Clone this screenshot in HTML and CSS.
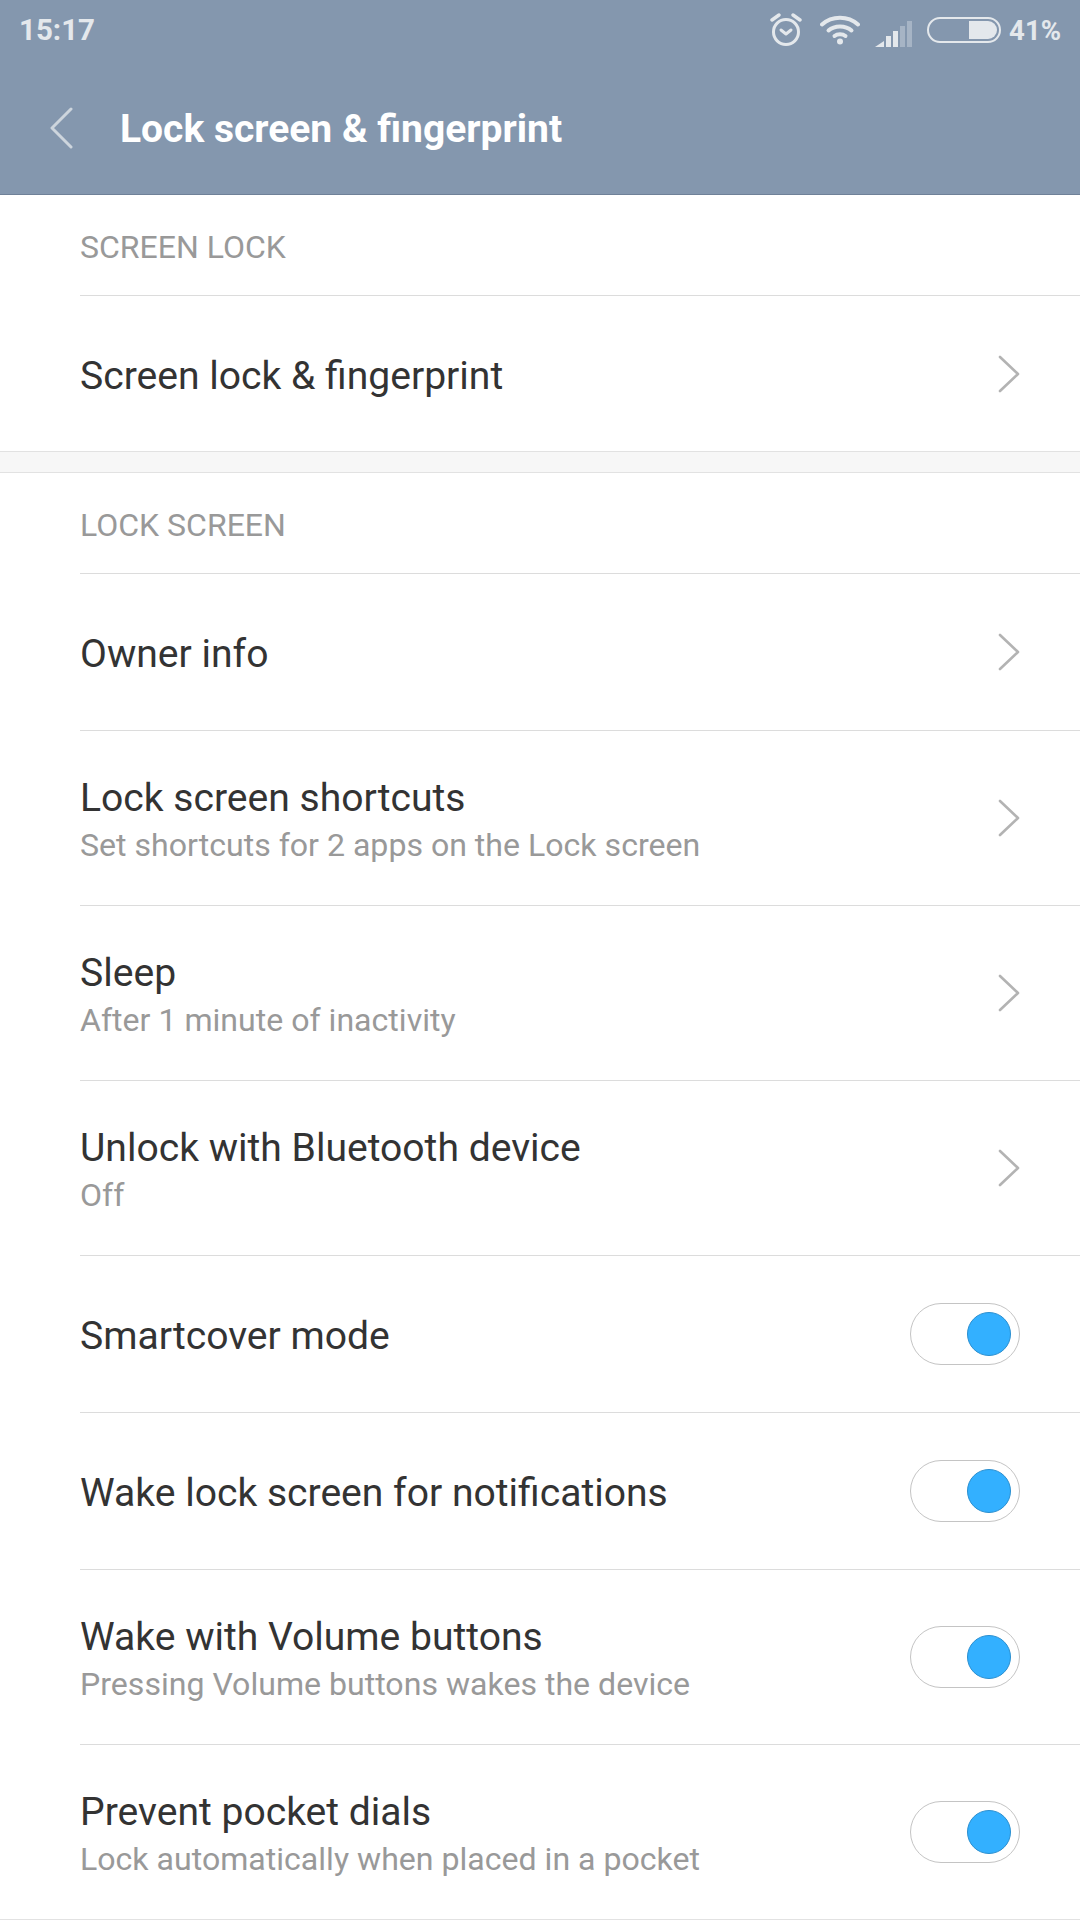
FILE: index.html
```html
<!DOCTYPE html>
<html lang="en">
<head>
  <meta charset="UTF-8" />
  <meta name="viewport" content="width=device-width, initial-scale=1" />
  <title>Lock screen & fingerprint</title>
  <link rel="stylesheet" href="styles.css">
</head>
<body>
  <header class="page-header">
    <div class="status-bar">
      <span class="clock">15:17</span>
      <div class="status-icons">
        <svg class="icon-alarm" width="32" height="34" viewBox="0 0 32 34" fill="none" stroke="#e4e8ec" stroke-width="3" stroke-linecap="round" stroke-linejoin="round">
          <circle cx="16" cy="19" r="12.5"/>
          <path d="M11 17l5 4 5-4"/>
          <path d="M2 7l7-5M30 7l-7-5" stroke-width="3.4"/>
        </svg>
        <svg class="icon-wifi" width="40" height="30" viewBox="0 0 40 30" fill="none" stroke="#e4e8ec" stroke-width="4" stroke-linecap="round">
          <path d="M2 9.500C12 0.500 28 0.500 38 9.500"/>
          <path d="M8.500 15.500C14.500 10 25.500 10 31.500 15.500"/>
          <path d="M14.500 21C17.500 18.500 22.500 18.500 25.500 21"/>
          <circle cx="20" cy="26.500" r="3" fill="#e4e8ec" stroke="none"/>
        </svg>
        <svg class="icon-signal" width="38" height="26" viewBox="0 0 38 26">
          <path d="M0 26l9-6v6z" fill="#e4e8ec"/>
          <rect x="11" y="15" width="5" height="11" fill="#e4e8ec"/>
          <rect x="18" y="10" width="5" height="16" fill="#e4e8ec"/>
          <rect x="25" y="5" width="5" height="21" fill="#a6b4c5"/>
          <rect x="32" y="0" width="5" height="26" fill="#a6b4c5"/>
        </svg>
        <div class="battery"><div class="battery-fill"></div></div>
        <span class="battery-text">41%</span>
      </div>
    </div>
    <div class="toolbar">
      <svg class="back-icon" width="24" height="42" viewBox="0 0 24 42" fill="none" stroke="#cdd5dd" stroke-width="3" stroke-linecap="round" stroke-linejoin="round">
        <path d="M22 2L3 21l19 19"/>
      </svg>
      <h1>Lock screen &amp; fingerprint</h1>
    </div>
  </header>

  <main>
    <section class="group">
      <h2 class="group-title">SCREEN LOCK</h2>
      <div class="row">
        <div class="row-text"><div class="row-name">Screen lock &amp; fingerprint</div></div>
        <svg class="chevron" width="22" height="38" viewBox="0 0 22 38" fill="none" stroke="#b3b3b3" stroke-width="2.600" stroke-linecap="round" stroke-linejoin="round"><path d="M2 2l18 17L2 36"/></svg>
      </div>
    </section>

    <section class="group group-second">
      <h2 class="group-title">LOCK SCREEN</h2>
      <div class="row">
        <div class="row-text"><div class="row-name">Owner info</div></div>
        <svg class="chevron" width="22" height="38" viewBox="0 0 22 38" fill="none" stroke="#b3b3b3" stroke-width="2.600" stroke-linecap="round" stroke-linejoin="round"><path d="M2 2l18 17L2 36"/></svg>
      </div>
      <div class="row row-tall">
        <div class="row-text">
          <div class="row-name">Lock screen shortcuts</div>
          <div class="row-sub">Set shortcuts for 2 apps on the Lock screen</div>
        </div>
        <svg class="chevron" width="22" height="38" viewBox="0 0 22 38" fill="none" stroke="#b3b3b3" stroke-width="2.600" stroke-linecap="round" stroke-linejoin="round"><path d="M2 2l18 17L2 36"/></svg>
      </div>
      <div class="row row-tall">
        <div class="row-text">
          <div class="row-name">Sleep</div>
          <div class="row-sub">After 1 minute of inactivity</div>
        </div>
        <svg class="chevron" width="22" height="38" viewBox="0 0 22 38" fill="none" stroke="#b3b3b3" stroke-width="2.600" stroke-linecap="round" stroke-linejoin="round"><path d="M2 2l18 17L2 36"/></svg>
      </div>
      <div class="row row-tall">
        <div class="row-text">
          <div class="row-name">Unlock with Bluetooth device</div>
          <div class="row-sub">Off</div>
        </div>
        <svg class="chevron" width="22" height="38" viewBox="0 0 22 38" fill="none" stroke="#b3b3b3" stroke-width="2.600" stroke-linecap="round" stroke-linejoin="round"><path d="M2 2l18 17L2 36"/></svg>
      </div>
      <div class="row">
        <div class="row-text"><div class="row-name">Smartcover mode</div></div>
        <div class="switch"><div class="switch-knob"></div></div>
      </div>
      <div class="row">
        <div class="row-text"><div class="row-name">Wake lock screen for notifications</div></div>
        <div class="switch"><div class="switch-knob"></div></div>
      </div>
      <div class="row row-tall">
        <div class="row-text">
          <div class="row-name">Wake with Volume buttons</div>
          <div class="row-sub">Pressing Volume buttons wakes the device</div>
        </div>
        <div class="switch"><div class="switch-knob"></div></div>
      </div>
      <div class="row row-tall">
        <div class="row-text">
          <div class="row-name">Prevent pocket dials</div>
          <div class="row-sub">Lock automatically when placed in a pocket</div>
        </div>
        <div class="switch"><div class="switch-knob"></div></div>
      </div>
    </section>
  </main>
</body>
</html>
```

FILE: styles.css
```css
* {
  box-sizing: border-box;
}
body {
  margin: 0;
  width: 1080px;
  height: 1920px;
  overflow: hidden;
  font-family: Roboto, sans-serif;
  background: #f7f7f7;
  color: #333;
}

.page-header {
  height: 195px;
  background: #8497ae;
  border-bottom: 1px solid #6f8198;
  color: #fff;
}

.status-bar {
  height: 60px;
  padding: 0 19px;
  display: flex;
  justify-content: space-between;
  align-items: center;
}
.clock {
  font-size: 29.500px;
  font-weight: 700;
  color: #e4e8ec;
}
.status-icons {
  display: flex;
  align-items: center;
}
.icon-alarm {
  margin-right: 18px;
}
.icon-wifi {
  margin-right: 15px;
}
.icon-signal {
  margin-right: 14px;
  margin-top: 8px;
}
.battery {
  width: 74px;
  height: 26px;
  border: 2px solid #e4e8ec;
  border-radius: 13px;
  padding: 2px;
  margin-right: 8px;
  display: flex;
  justify-content: flex-end;
}
.battery-fill {
  width: 28px;
  background: #e4e8ec;
  border-radius: 0 9px 9px 0;
}
.battery-text {
  font-size: 27.500px;
  font-weight: 700;
  color: #e4e8ec;
}

.toolbar {
  height: 134px;
  padding: 0 0 0 49px;
  display: flex;
  align-items: center;
}
.back-icon {
  margin: 2px 47px 0 0;
}
h1 {
  margin: 4px 0 0;
  font-size: 39px;
  font-weight: 700;
}

.group {
  background: #fff;
}
.group:first-child {
  height: 257px;
  border-bottom: 1px solid #e2e2e2;
}
.group-second {
  height: 1448px;
  margin-top: 20px;
  border-top: 1px solid #e2e2e2;
  border-bottom: 1px solid #e2e2e2;
}
.group-title {
  margin: 0 0 0 80px;
  height: 100px;
  padding-top: 4px;
  display: flex;
  align-items: center;
  font-size: 32px;
  font-weight: 400;
  color: #999;
}

.row {
  margin-left: 80px;
  height: 157px;
  padding-right: 60px;
  border-top: 1px solid #dcdcdc;
  display: flex;
  justify-content: space-between;
  align-items: center;
}
.row-tall {
  height: 175px;
}
.row-text {
  padding-top: 3px;
}
.row-name {
  font-size: 39.100px;
  color: #333;
}
.row-sub {
  margin-top: 5px;
  font-size: 32.100px;
  color: #999;
}

.switch {
  width: 110px;
  height: 62px;
  border: 1px solid #c4c4c4;
  border-radius: 31px;
  padding-right: 8px;
  display: flex;
  justify-content: flex-end;
  align-items: center;
}
.switch-knob {
  width: 44px;
  height: 44px;
  border-radius: 50%;
  background: #33b0ff;
  border: 1px solid #2a8fd0;
}
```
